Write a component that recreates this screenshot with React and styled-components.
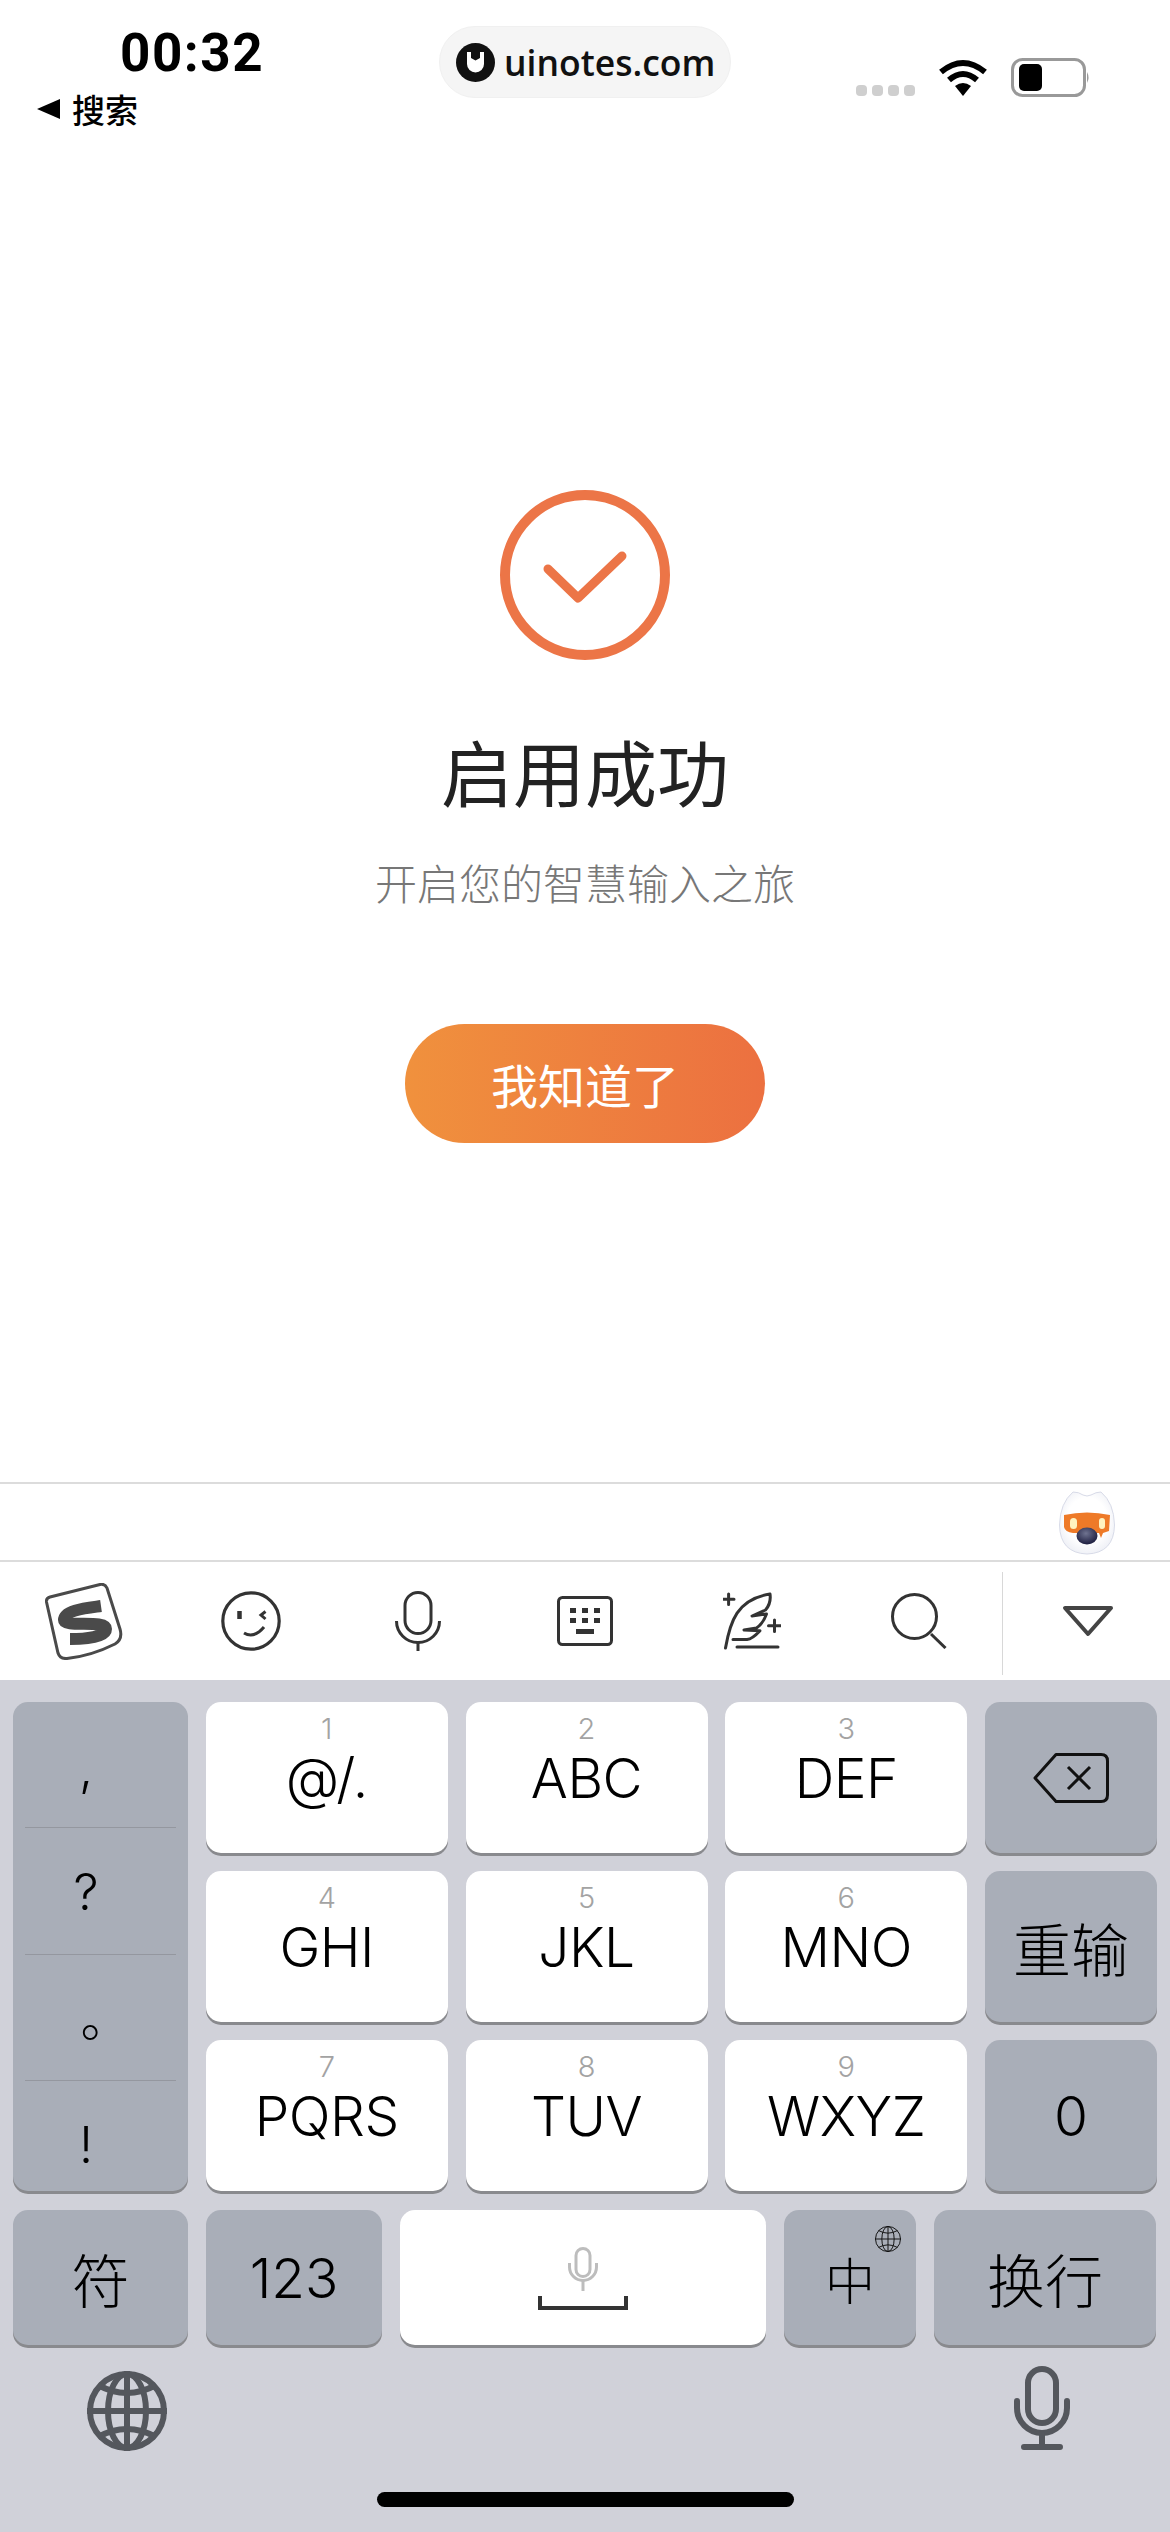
import React from "react";
import styled, { createGlobalStyle } from "styled-components";

const CJK = `"Noto Sans CJK SC", sans-serif`;
const UI = `Inter, "Noto Sans CJK SC", sans-serif`;

const Global = createGlobalStyle`
  html, body { margin: 0; padding: 0; background: #fff; }
  * { box-sizing: border-box; }
`;

const Page = styled.div`
  width: 1170px;
  height: 2532px;
  display: flex;
  flex-direction: column;
  overflow: hidden;
  background: #fff;
  font-family: ${UI};
`;

/* status bar */
const StatusBar = styled.header`
  height: 140px;
  display: grid;
  grid-template-columns: 439px 292px 1fr;
  align-items: start;
`;
const StatusLeft = styled.div`
  padding: 24px 0 0 37px;
  display: flex;
  flex-direction: column;
`;
const Time = styled.div`
  margin-left: 83px;
  font: 700 53px/58px Roboto, sans-serif;
  letter-spacing: 1.5px;
  color: #000;
`;
const BackLink = styled.div`
  display: flex;
  align-items: center;
  gap: 12px;
  margin-top: 7px;
  font: 500 33px/40px ${CJK};
  color: #000;
`;
const BackArrow = styled.span`
  width: 0;
  height: 0;
  border-top: 10px solid transparent;
  border-bottom: 10px solid transparent;
  border-right: 23px solid #000;
`;
const BrandPill = styled.div`
  margin-top: 26px;
  height: 72px;
  border-radius: 36px;
  background: #f5f5f5;
  border: 1px solid #f0f0f0;
  display: flex;
  align-items: center;
  gap: 9px;
  padding-left: 16px;
  font: 600 35.5px/44px "Open Sans", sans-serif;
  color: #111;
`;
const StatusRight = styled.div`
  margin-top: 58px;
  height: 39px;
  padding-left: 125px;
  display: flex;
  align-items: flex-end;
`;
const SignalDots = styled.div`
  display: flex;
  gap: 5px;
  margin-bottom: 1px;
  margin-right: 23px;
`;
const SignalDot = styled.span`
  width: 11px;
  height: 11px;
  border-radius: 4px;
  background: #cfcfcf;
`;
const WifiIcon = styled.svg`
  margin-right: 23px;
  margin-bottom: 1px;
`;

/* success panel */
const Main = styled.main`
  flex: 1;
  display: flex;
  flex-direction: column;
  align-items: center;
  padding-top: 350px;
`;
const Title = styled.h1`
  margin: 64px 0 0;
  font: 400 72px/92px ${CJK};
  color: #222;
`;
const Subtitle = styled.p`
  margin: 36px 0 0;
  font: 300 42px/60px ${CJK};
  color: #777;
`;
const DoneButton = styled.button`
  margin-top: 112px;
  width: 360px;
  height: 119px;
  border: 0;
  border-radius: 60px;
  background: linear-gradient(90deg, #f0913d 0%, #ec7040 100%);
  color: #fff;
  font: 400 47px/60px ${CJK};
`;

/* candidates + toolbar */
const CandidateBar = styled.div`
  height: 78px;
  border-top: 2px solid #dcdcdc;
  display: flex;
  justify-content: flex-end;
  padding: 7px 55px 0 0;
`;
const Toolbar = styled.div`
  height: 120px;
  border-top: 2px solid #dcdcdc;
  display: grid;
  grid-template-columns: repeat(6, 167px) 1fr;
  align-items: center;
`;
const ToolCell = styled.div`
  display: flex;
  justify-content: center;
  align-items: center;
  height: 100%;
`;
const CollapseCell = styled(ToolCell)`
  position: relative;
  padding-left: 4px;
  &::before {
    content: "";
    position: absolute;
    left: 0;
    top: 10px;
    bottom: 5px;
    width: 1px;
    background: #d8d8d8;
  }
`;

/* keyboard */
const Keyboard = styled.section`
  height: 852px;
  background: #d0d1d9;
  padding: 22px 13px 0;
  display: flex;
  flex-direction: column;
`;
const KeyGrid = styled.div`
  display: grid;
  grid-template-columns: 175px 242px 242px 242px 172px;
  grid-template-rows: 151px 151px 151px;
  gap: 18px;
  column-gap: 17.75px;
`;
const BottomKeys = styled.div`
  margin-top: 19px;
  display: grid;
  grid-template-columns: 175px 176px 366px 132px 222px;
  grid-template-rows: 135px;
  column-gap: 18px;
`;
const Key = styled.div`
  position: relative;
  border-radius: 15px;
  background: ${(p) => (p.$light ? "#fff" : "#a9aeb8")};
  box-shadow: 0 3px 0 #898a8e;
  color: #000;
  display: flex;
  align-items: center;
  justify-content: center;
  font: 300 55px/66px ${UI};
`;
const DialKey = styled(Key)`
  flex-direction: column;
  justify-content: flex-start;
  padding-top: 9px;
`;
const DialDigit = styled.span`
  font: 300 29px/36px Inter, sans-serif;
  color: #a3a3a3;
`;
const DialLetters = styled.span`
  font: 300 55px/62px Inter, sans-serif;
  letter-spacing: -0.5px;
`;
const CjkLabel = styled.span`
  font: 300 ${(p) => p.$size || 58}px/66px ${CJK};
`;
const PunctuationKey = styled(Key)`
  grid-row: 1 / span 3;
  grid-column: 1;
  flex-direction: column;
  align-items: stretch;
  justify-content: flex-start;
  padding: 0 12px;
`;
const PunctuationCell = styled.div`
  height: ${(p) => p.$h}px;
  display: flex;
  justify-content: center;
  padding-right: ${(p) => p.$right ?? 29}px;
  padding-left: ${(p) => p.$left ?? 0}px;
  padding-top: ${(p) => p.$top}px;
  border-top: ${(p) => (p.$first ? "0" : "1px solid #94979f")};
  font: 300 50px/56px ${(p) => (p.$cjk ? CJK : "Inter, sans-serif")};
`;
const SpaceGlyph = styled.div`
  display: flex;
  flex-direction: column;
  align-items: center;
  gap: 5px;
  padding-top: 2px;
`;
const SpaceBracket = styled.span`
  width: 90px;
  height: 14px;
  border: 4px solid #333;
  border-top: 0;
`;
const GlobeBadge = styled.span`
  position: absolute;
  top: 16px;
  right: 15px;
  display: flex;
`;
const SystemRow = styled.div`
  margin-top: 21px;
  height: 85px;
  padding: 0 87px 0 74px;
  display: flex;
  justify-content: space-between;
  align-items: flex-start;
`;
const GlobeSlot = styled.div`
  margin-top: 5px;
  display: flex;
`;
const HomeIndicator = styled.div`
  margin: 41px auto 0;
  width: 417px;
  height: 15px;
  border-radius: 8px;
  background: #000;
`;

const S = "#333";

const SougouLogo = () => (
  <svg width="78" height="77" viewBox="0 0 78 77" fill="none">
    <path d="M5 14 L55 1.5 Q60 0.5 62 5 L75 46 Q78 56 70 61 Q46 73 22 75.5 Q15 76 13 70 L1.5 19 Q1 15 5 14 Z" stroke="#4a4a4a" strokeWidth="3" fill="#fff" />
    <path d="M56 23 C42 25 19 27 19 37 C19 45 61 36 61 46 C61 54 40 56 25 56" stroke="#4a4a4a" strokeWidth="12" />
  </svg>
);
const Smiley = () => (
  <svg width="60" height="60" viewBox="0 0 60 60" fill="none" stroke={S}>
    <circle cx="30" cy="30" r="28.2" strokeWidth="3.2" />
    <path d="M18.5 20 V28" strokeWidth="4.5" />
    <path d="M44.5 20.5 L40 24 L44.5 28" strokeWidth="3" />
    <path d="M23 42 Q33 48 43 36" strokeWidth="3" />
  </svg>
);
const MicLine = () => (
  <svg width="46" height="60" viewBox="0 0 46 60" fill="none" stroke={S} strokeWidth="3">
    <rect x="10" y="1.5" width="26" height="41" rx="13" />
    <path d="M1.5 30 A21.5 21.5 0 0 0 44.5 30" />
    <path d="M23 51 V60" />
  </svg>
);
const KeyboardIcon = () => (
  <svg width="56" height="50" viewBox="0 0 56 50" fill="none">
    <rect x="1.5" y="1.5" width="53" height="47" rx="4" stroke={S} strokeWidth="3" />
    <g fill={S}>
      {[13, 25, 37].map((x) => (
        <React.Fragment key={x}>
          <rect x={x} y="12" width="6" height="5" />
          <rect x={x} y="22" width="6" height="5" />
        </React.Fragment>
      ))}
      <rect x="19" y="33" width="18" height="5" />
    </g>
  </svg>
);
const Feather = () => (
  <svg width="58" height="58" viewBox="0 0 58 58" fill="none" stroke={S} strokeWidth="3" strokeLinejoin="round" strokeLinecap="round">
    <path d="M2.5 56 C7 30 14 7 47 2 C48 9 46 14 42.5 18 L29 24 L43.5 22 C41 29 38 33 33.5 36 L21 38 L37 38.7 C33 43 29 47 24 47.5 L10 47.5" />
    <path d="M14 55 H55" />
    <path d="M5.6 2 V12.5 M0.5 7.3 H11" />
    <path d="M51.5 28 V39.5 M45.5 33.7 H57.5" />
  </svg>
);
const SearchIcon = () => (
  <svg width="56" height="56" viewBox="0 0 56 56" fill="none" stroke={S} strokeWidth="3">
    <circle cx="23.5" cy="23.5" r="22" />
    <path d="M40 41 L54.5 55" />
  </svg>
);
const Chevron = () => (
  <svg width="52" height="32" viewBox="0 0 52 32" fill="none" stroke="#444" strokeWidth="4" strokeLinejoin="round">
    <path d="M3 3 H49 L26 29 Z" />
  </svg>
);
const Mascot = () => (
  <svg width="56" height="64" viewBox="0 0 56 64">
    <defs>
      <radialGradient id="nose" cx="45%" cy="35%" r="65%">
        <stop offset="0" stopColor="#6f7390" />
        <stop offset="1" stopColor="#1c1d3f" />
      </radialGradient>
      <radialGradient id="egg" cx="50%" cy="45%" r="60%">
        <stop offset="0.6" stopColor="#fff" />
        <stop offset="1" stopColor="#eceef5" />
      </radialGradient>
    </defs>
    <path d="M14 1 Q20 1 24 4 Q28 6 32 4 Q37 1 42 1 Q55 12 55.5 34 Q55 62 28 63 Q1 62 0.5 34 Q1 12 14 1 Z" fill="url(#egg)" stroke="#d8dbe8" />
    <path d="M5 24 Q28 19 51 24 L50 40 L44 42 L42 47 L40 42 L14 42 Q6 41 5 36 Z" fill="#ee7a28" />
    <rect x="11" y="27" width="7" height="11" rx="3.5" fill="#fff3c0" />
    <rect x="40" y="27" width="6" height="11" rx="3" fill="#fff3c0" />
    <ellipse cx="28" cy="45" rx="10.5" ry="8.5" fill="url(#nose)" />
  </svg>
);
const Backspace = () => (
  <svg width="76" height="50" viewBox="0 0 76 50" fill="none" stroke="#111" strokeWidth="3" strokeLinejoin="round">
    <path d="M23 1.5 H68 Q74.5 1.5 74.5 8 V42 Q74.5 48.5 68 48.5 H23 L2 25 Z" />
    <path d="M35 14 L57 36 M57 14 L35 36" />
  </svg>
);
const GlobeGlyph = ({ size, color, sw }) => (
  <svg width={size} height={size} viewBox="0 0 80 80" fill="none" stroke={color} strokeWidth={sw}>
    <circle cx="40" cy="40" r={40 - sw / 2} />
    <ellipse cx="40" cy="40" rx="19" ry={40 - sw / 2} />
    <path d="M40 0 V80 M0 40 H80" />
    <path d="M11 14 Q40 30 69 14 M11 66 Q40 50 69 66" />
  </svg>
);
const BigMic = () => (
  <svg width="56" height="84" viewBox="0 0 56 84" fill="none" stroke="#54575d" strokeWidth="6" strokeLinecap="round">
    <rect x="14" y="3" width="28" height="54" rx="14" />
    <path d="M3 35 V42 A25 25 0 0 0 53 42 V35" />
    <path d="M28 68 V80 M10 81 H46" />
  </svg>
);
const SmallMic = () => (
  <svg width="30" height="44" viewBox="0 0 30 44" fill="none" stroke="#bdbdbd" strokeWidth="3">
    <rect x="8" y="1.5" width="14" height="28" rx="7" />
    <path d="M1.5 16 V20 A13.5 13.5 0 0 0 28.5 20 V16" />
    <path d="M15 33 V44" strokeWidth="3" />
  </svg>
);

const DialButton = ({ d, l }) => (
  <DialKey $light>
    <DialDigit>{d}</DialDigit>
    <DialLetters>{l}</DialLetters>
  </DialKey>
);

export default function App() {
  return (
    <Page>
      <Global />
      <StatusBar>
        <StatusLeft>
          <Time>00:32</Time>
          <BackLink>
            <BackArrow />
            搜索
          </BackLink>
        </StatusLeft>
        <BrandPill>
          <svg width="39" height="39" viewBox="0 0 39 39">
            <circle cx="19.5" cy="19.5" r="19.5" fill="#111" />
            <path d="M11 9 H15 V15 L19.5 17.5 L24 15 V9 H28 V21 A8.5 8.5 0 0 1 11 21 Z" fill="#fff" />
          </svg>
          uinotes.com
        </BrandPill>
        <StatusRight>
          <SignalDots>
            <SignalDot />
            <SignalDot />
            <SignalDot />
            <SignalDot />
          </SignalDots>
          <WifiIcon width="50" height="37" viewBox="0 0 50 37" fill="none" stroke="#000" strokeWidth="6">
            <path d="M3 13 Q25 -5 47 13" />
            <path d="M11 21 Q25 9 39 21" />
            <path d="M17 27 Q25 21 33 27 L25 37 Z" fill="#000" stroke="none" />
          </WifiIcon>
          <svg width="79" height="39" viewBox="0 0 79 39" fill="none">
            <rect x="1.5" y="1.5" width="72" height="36" rx="10" stroke="#999" strokeWidth="3" />
            <rect x="8" y="6" width="23" height="27" rx="5" fill="#000" />
            <path d="M76 14 Q79 19.5 76 25 Z" fill="#999" />
          </svg>
        </StatusRight>
      </StatusBar>

      <Main>
        <svg width="170" height="170" viewBox="0 0 170 170" fill="none" stroke="#ec7547">
          <circle cx="85" cy="85" r="80" strokeWidth="10" />
          <path d="M48 79 L78 108 L122 66" strokeWidth="9" strokeLinecap="round" strokeLinejoin="round" />
        </svg>
        <Title>启用成功</Title>
        <Subtitle>开启您的智慧输入之旅</Subtitle>
        <DoneButton>我知道了</DoneButton>
      </Main>

      <CandidateBar>
        <Mascot />
      </CandidateBar>
      <Toolbar>
        <ToolCell><SougouLogo /></ToolCell>
        <ToolCell><Smiley /></ToolCell>
        <ToolCell><MicLine /></ToolCell>
        <ToolCell><KeyboardIcon /></ToolCell>
        <ToolCell><Feather /></ToolCell>
        <ToolCell><SearchIcon /></ToolCell>
        <CollapseCell><Chevron /></CollapseCell>
      </Toolbar>

      <Keyboard>
        <KeyGrid>
          <PunctuationKey>
            <PunctuationCell $first $h={126} $top={38}>,</PunctuationCell>
            <PunctuationCell $h={127} $top={36}>?</PunctuationCell>
            <PunctuationCell $cjk $right={0} $left={10} $h={127} $top={32}>。</PunctuationCell>
            <PunctuationCell $h={111} $top={36}>!</PunctuationCell>
          </PunctuationKey>
          <DialButton d="1" l="@/." />
          <DialButton d="2" l="ABC" />
          <DialButton d="3" l="DEF" />
          <Key><Backspace /></Key>
          <DialButton d="4" l="GHI" />
          <DialButton d="5" l="JKL" />
          <DialButton d="6" l="MNO" />
          <Key><CjkLabel>重输</CjkLabel></Key>
          <DialButton d="7" l="PQRS" />
          <DialButton d="8" l="TUV" />
          <DialButton d="9" l="WXYZ" />
          <Key>0</Key>
        </KeyGrid>
        <BottomKeys>
          <Key><CjkLabel>符</CjkLabel></Key>
          <Key>123</Key>
          <Key $light>
            <SpaceGlyph>
              <SmallMic />
              <SpaceBracket />
            </SpaceGlyph>
          </Key>
          <Key>
            <CjkLabel $size={50}>中</CjkLabel>
            <GlobeBadge><GlobeGlyph size={26} color="#111" sw={3} /></GlobeBadge>
          </Key>
          <Key><CjkLabel>换行</CjkLabel></Key>
        </BottomKeys>
        <SystemRow>
          <GlobeSlot><GlobeGlyph size={80} color="#54575d" sw={6} /></GlobeSlot>
          <BigMic />
        </SystemRow>
        <HomeIndicator />
      </Keyboard>
    </Page>
  );
}
